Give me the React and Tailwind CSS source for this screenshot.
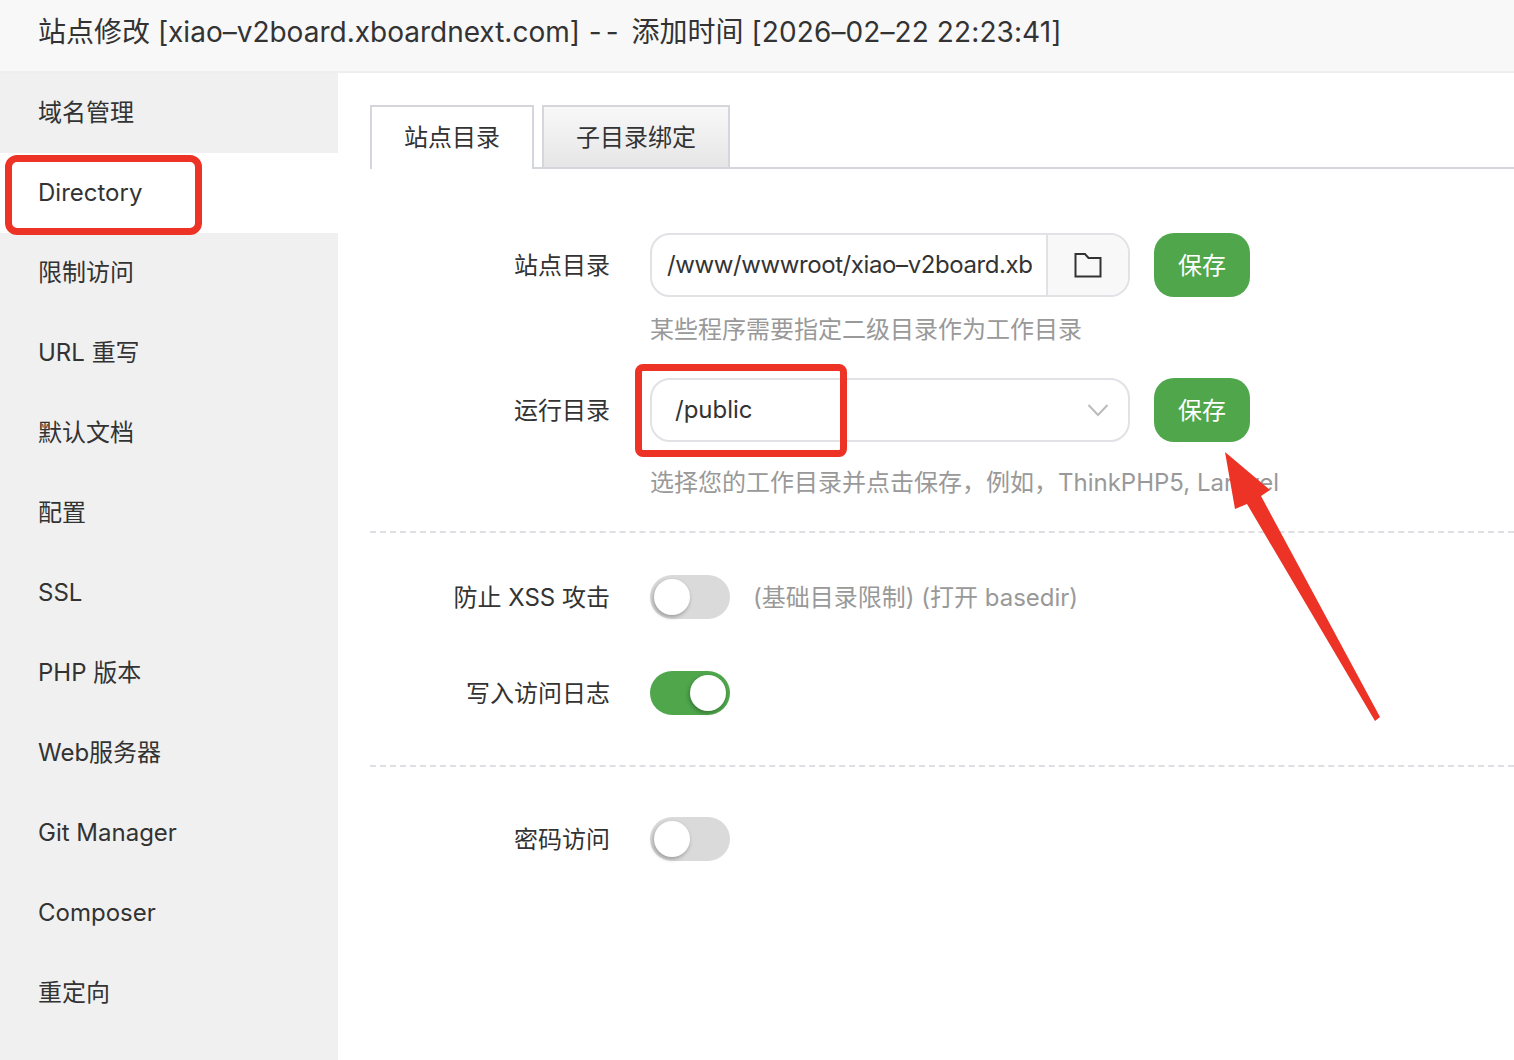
import React from 'react';

const font = 'font-["Inter","Noto_Sans_CJK_SC",sans-serif]';

const menu = ['域名管理', 'Directory', '限制访问', 'URL 重写', '默认文档', '配置', 'SSL', 'PHP 版本', 'Web服务器', 'Git Manager', 'Composer', '重定向'];

const Toggle = ({ on }) => (
  <div className={`flex h-11 w-20 shrink-0 items-center rounded-full p-1 ${on ? 'justify-end bg-[#4fa64b]' : 'justify-start bg-[#dadada]'}`}>
    <div className="h-9 w-9 rounded-full bg-white shadow-[-1px_2px_4px_rgba(0,0,0,0.3)]"></div>
  </div>
);

const Label = ({ children }) => (
  <div className="w-[312px] shrink-0 pr-10 pt-[2px] text-right text-[24px] text-[#333]">{children}</div>
);

const SaveButton = () => (
  <button className="ml-6 h-16 w-24 rounded-[20px] bg-[#4fa64b] pt-[2px] text-[24px] text-white">保存</button>
);

const App = () => {
  return (
    <div className={`relative h-[1060px] w-full overflow-hidden bg-white text-[#333] ${font}`}>
      <div className="flex h-[73px] items-center whitespace-pre border-b-2 border-[#eeeeee] bg-[#f8f8f8] pb-[8px] pl-[38px] text-[28px] leading-none text-[#333]">
        <span>站点修改 [xiao–v2board.xboardnext.com] </span>
        <span className="ml-[1px] mr-[9px] tracking-[4px]">--</span>
        <span>添加时间 </span>
        <span className="tracking-[0.1px]">[2026–02–22 22:23:41]</span>
      </div>

      <div className="flex">
        <div className="h-[987px] w-[338px] shrink-0 bg-[#f0f0f0]">
          {menu.map((item) => (
            <div key={item} className={`flex h-20 items-center pl-[38px] text-[24px] ${item === 'Directory' ? 'bg-white' : ''}`}>
              {item}
            </div>
          ))}
        </div>

        <div className="min-w-0 flex-1 pl-8 pt-8">
          <div className="flex h-16 items-end gap-2 border-b-2 border-[#d5d5dc]">
            <div className="-mb-[2px] flex h-16 w-[164px] items-center justify-center border-2 border-b-0 border-[#d5d5dc] bg-white text-[24px]">站点目录</div>
            <div className="flex h-[62px] w-[188px] items-center justify-center border-2 border-b-0 border-[#d5d5dc] bg-gradient-to-b from-[#f8f8f8] to-[#e6e6e6] pt-[2px] text-[24px]">子目录绑定</div>
          </div>

          <div className="-ml-8 mt-16">
            <div className="flex items-center">
              <Label>站点目录</Label>
              <div className="flex h-16 w-[480px] overflow-hidden rounded-[20px] border-2 border-[#e1e1e6]">
                <div className="flex min-w-0 flex-1 items-center overflow-hidden whitespace-nowrap pl-[15px] pr-[14px] text-[24px] tracking-[-0.4px]">
                  <span className="block overflow-hidden">/www/wwwroot/xiao–v2board.xboardnext.com</span>
                </div>
                <div className="flex w-[82px] shrink-0 items-center justify-center border-l-2 border-[#e1e1e6] bg-[#f8f8f8]">
                  <svg width="28" height="26" viewBox="0 0 28 26" fill="none" stroke="#333" strokeWidth="2">
                    <path d="M1.5 2 H11 L14.5 6 H26.5 V24.5 H1.5 Z" />
                  </svg>
                </div>
              </div>
              <SaveButton />
            </div>
            <div className="ml-[312px] mt-[17px] text-[24px] leading-8 text-[#999]">某些程序需要指定二级目录作为工作目录</div>

            <div className="mt-8 flex items-center">
              <Label>运行目录</Label>
              <div className="flex h-16 w-[480px] items-center justify-between rounded-[20px] border-2 border-[#e1e1e6] pl-[23px] pr-[19px] text-[24px]">
                <span>/public</span>
                <svg width="22" height="14" viewBox="0 0 22 14" fill="none" stroke="#bbbbbb" strokeWidth="2">
                  <path d="M1.5 2 L11 12 L20.5 2" />
                </svg>
              </div>
              <SaveButton />
            </div>
            <div className="ml-[312px] mt-6 whitespace-nowrap pt-[1px] text-[24px] leading-[31px] text-[#999]">选择您的工作目录并点击保存，例如，ThinkPHP5, Laravel</div>

            <div className="ml-8 mt-[33px] border-t-2 border-dashed border-[#dedee3]"></div>

            <div className="mt-[42px] flex items-center">
              <Label>防止 XSS 攻击</Label>
              <Toggle />
              <div className="ml-[23px] pt-[2px] text-[24px] text-[#999]">(基础目录限制) (打开 basedir)</div>
            </div>
            <div className="mt-[52px] flex items-center">
              <Label>写入访问日志</Label>
              <Toggle on />
            </div>

            <div className="ml-8 mt-[50px] border-t-2 border-dashed border-[#dedee3]"></div>

            <div className="mt-[50px] flex items-center">
              <Label>密码访问</Label>
              <Toggle />
            </div>
          </div>
        </div>
      </div>

      {/* annotations on top of the screenshot */}
      <div className="absolute left-[5px] top-[155px] h-[80px] w-[197px] rounded-[12px] border-[7px] border-[#ec3325]"></div>
      <div className="absolute left-[635px] top-[364px] h-[93px] w-[212px] rounded-[8px] border-[7px] border-[#ec3325]"></div>
      <svg className="absolute left-[1220px] top-[448px]" width="170" height="280" viewBox="1220 448 170 280">
        <path d="M1225 452 L1270 490 L1261 496 L1380 717 L1375 721 L1247 504 L1235 509 Z" fill="#ec3325" />
      </svg>
    </div>
  );
};

export default App;
